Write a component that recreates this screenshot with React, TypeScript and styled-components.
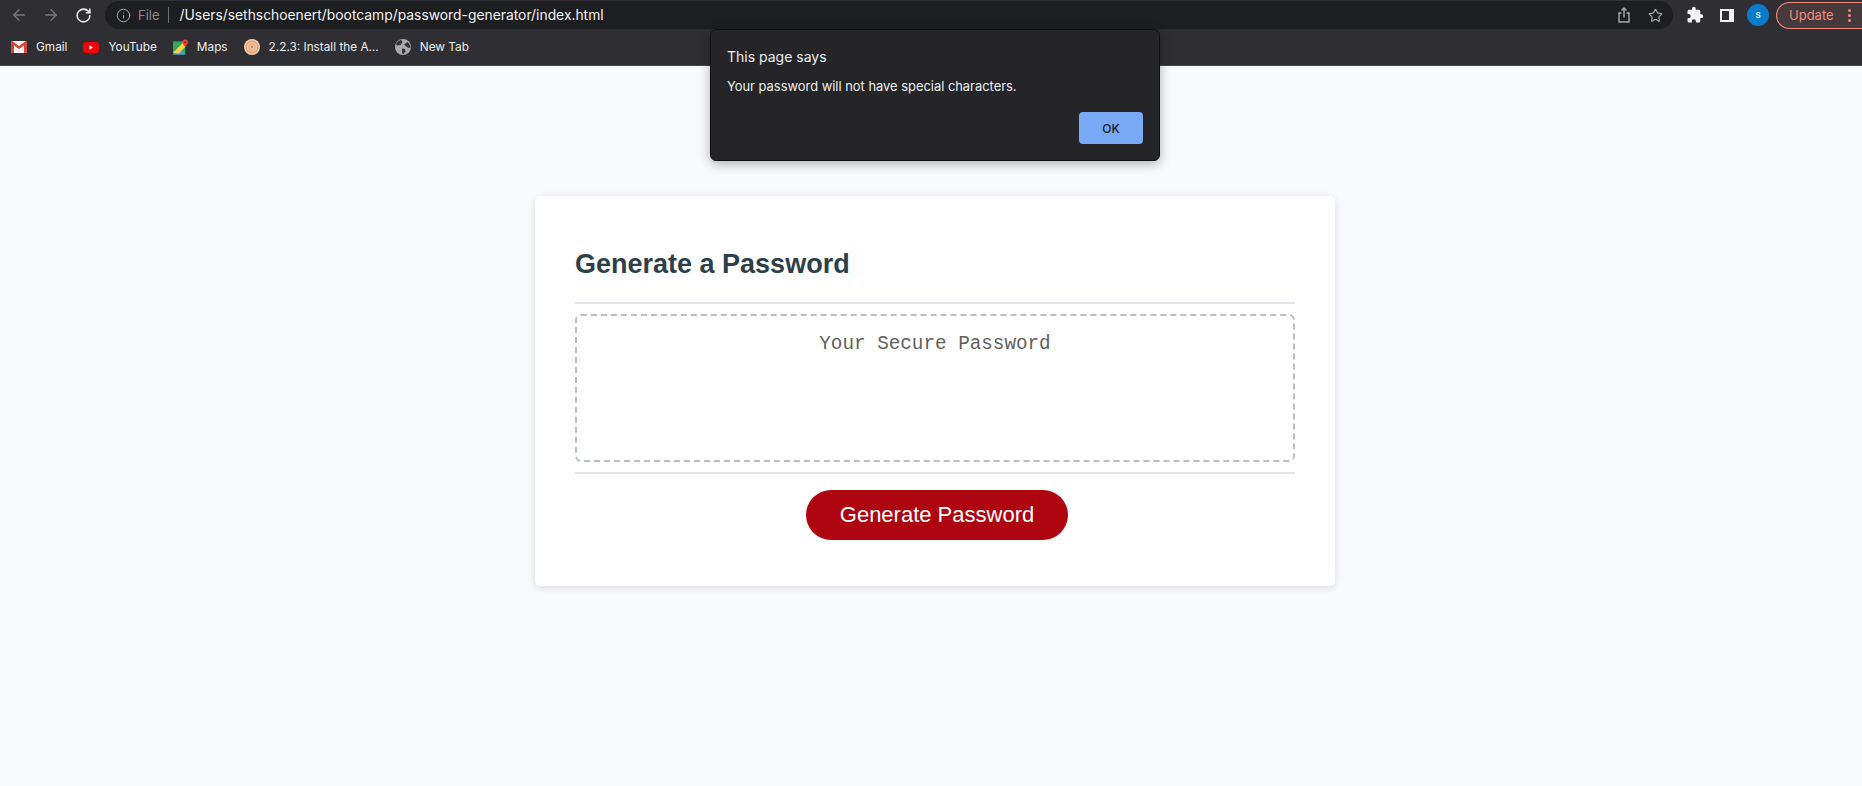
import styled, { createGlobalStyle } from "styled-components";
import { ArrowLeft, ArrowRight, RotateCw, Info, Star } from "lucide-react";
import { MdExtension } from "react-icons/md";

const GlobalStyle = createGlobalStyle`
  html, body {
    margin: 0;
    padding: 0;
    height: 786px;
    overflow: hidden;
    background-color: #f9fafe;
  }
`;

// #region browser chrome
const Chrome = styled.div`
  height: 66px;
  box-sizing: border-box;
  border-bottom: 1px solid #45464a;
  background-color: #2f2f33;
  font-family: Inter, "Liberation Sans", sans-serif;
`;

const Toolbar = styled.div`
  height: 30px;
  padding-left: 3px;
  display: flex;
  align-items: center;
`;

const NavButton = styled.div<{ $dim?: boolean }>`
  width: 32px;
  display: flex;
  justify-content: center;
  color: ${(p) => (p.$dim ? "#77787c" : "#e8eaed")};
`;

const Omnibox = styled.div`
  flex: 1;
  height: 28px;
  margin-left: 6px;
  padding: 0 10px 0 11px;
  display: flex;
  align-items: center;
  border-radius: 14px;
  background-color: #1d1e20;
`;

const SiteLabel = styled.span`
  margin-left: 7px;
  padding-right: 8px;
  border-right: 1px solid #6b6d70;
  line-height: 16px;
  font-size: 13px;
  color: #8b8d90;
`;

const Url = styled.span`
  flex: 1;
  margin-left: 11px;
  font-size: 13.85px;
  color: #f1f3f4;
`;

const OmniboxActions = styled.div`
  display: flex;
  align-items: center;
  gap: 17px;
  color: #a9abae;
`;

const ToolbarActions = styled.div`
  width: 189px;
  flex-shrink: 0;
  padding-left: 13px;
  box-sizing: border-box;
  display: flex;
  align-items: center;
  color: #f1f3f4;

  svg {
    flex-shrink: 0;
  }
`;

const SidePanelIcon = styled.div`
  width: 14px;
  height: 13px;
  flex-shrink: 0;
  margin-left: 16px;
  box-sizing: border-box;
  border: 2px solid #f1f3f4;
  border-right-width: 5px;
`;

const Avatar = styled.div`
  width: 22px;
  height: 22px;
  margin-left: 13px;
  display: flex;
  align-items: center;
  justify-content: center;
  flex-shrink: 0;
  border-radius: 50%;
  background-color: #0a7ccb;
  font-size: 8px;
  font-weight: 600;
  color: #e8f3fb;
`;

const UpdateChip = styled.div`
  width: 86px;
  height: 27px;
  margin-left: 7px;
  padding-left: 12px;
  box-sizing: border-box;
  display: flex;
  align-items: center;
  flex-shrink: 0;
  border: 1px solid #f28b82;
  border-right: none;
  border-radius: 14px 0 0 14px;
  background-color: #46393b;
  font-size: 13px;
  color: #f28b82;
`;

const Dots = styled.div`
  margin-left: 14px;
  display: flex;
  flex-direction: column;
  gap: 2px;
`;

const Dot = styled.span`
  width: 3px;
  height: 3px;
  border-radius: 50%;
  background-color: #f28b82;
`;

const BookmarkBar = styled.div`
  height: 34px;
  padding-left: 11px;
  display: flex;
  align-items: center;
  gap: 16px;
`;

const Bookmark = styled.div`
  display: flex;
  align-items: center;
  gap: 9px;
  font-size: 11.8px;
  color: #eceef0;
`;
// #endregion browser chrome

// #region page
const Page = styled.main`
  padding: 130px 0 0 8px;
  font-family: "Liberation Sans", Arial, sans-serif;
`;

const Card = styled.section`
  width: 800px;
  margin: 0 auto;
  padding: 30px 40px 46px;
  box-sizing: border-box;
  border-radius: 5px;
  background-color: #fff;
  box-shadow: rgba(0, 0, 25, 0.12) 0 2px 8px;
  color: #2f3f4a;
`;

const Heading = styled.h2`
  margin: 22px 0 22px;
  line-height: 32px;
  font-size: 27px;
  font-weight: 700;
`;

const Rule = styled.div`
  height: 2px;
  background-color: #e1e5ea;
`;

const PasswordBox = styled.div`
  height: 148px;
  margin: 10px 0;
  padding-top: 17px;
  box-sizing: border-box;
  border: 2px dashed #b9bfc8;
  border-radius: 6px;
  text-align: center;
  line-height: 22px;
  font-family: "Liberation Mono", "Courier New", monospace;
  font-size: 19.3px;
  color: #5f5f5f;
`;

const Footer = styled.div`
  padding-top: 16px;
  display: flex;
  justify-content: center;
`;

const GenerateButton = styled.button`
  width: 262px;
  height: 50px;
  margin-left: 4px;
  padding: 0;
  border: none;
  border-radius: 25px;
  background-color: #ae0511;
  font-family: inherit;
  font-size: 22px;
  color: #fff;
`;
// #endregion page

// #region alert
const AlertBox = styled.div`
  position: absolute;
  top: 29px;
  left: 710px;
  width: 450px;
  height: 132px;
  padding: 16px;
  box-sizing: border-box;
  border: 1px solid #111;
  border-radius: 6px;
  background-color: #252527;
  box-shadow: rgba(0, 0, 0, 0.3) 0 3px 12px;
  font-family: Inter, "Liberation Sans", sans-serif;
  color: #eceef0;
`;

const AlertTitle = styled.div`
  line-height: 22px;
  font-size: 14px;
`;

const AlertMessage = styled.div`
  margin-top: 9px;
  line-height: 20px;
  font-size: 12.9px;
`;

const AlertActions = styled.div`
  margin-top: 15px;
  display: flex;
  justify-content: flex-end;
`;

const OkButton = styled.button`
  width: 64px;
  height: 32px;
  padding: 0;
  border: none;
  border-radius: 4px;
  background-color: #7aa9f5;
  font-family: inherit;
  font-size: 12px;
  font-weight: 500;
  color: #16181c;
`;
// #endregion alert

function ShareIcon() {
  return (
    <svg width="14" height="16" viewBox="0 0 14 16" fill="none" stroke="currentColor" strokeWidth="1.4">
      <path d="M4.5 6H2v9h10V6H9.5" />
      <path d="M7 10.5V1.2M4.5 3.5 7 1l2.5 2.5" />
    </svg>
  );
}

function GmailIcon() {
  return (
    <svg width="16" height="12" viewBox="0 0 16 12">
      <rect width="16" height="12" rx="1" fill="#f1f1f1" />
      <path d="M0 1v10a1 1 0 0 0 1 1h2V4.5L8 8l5-3.5V12h2a1 1 0 0 0 1-1V1a1 1 0 0 0-1.6-.8L8 5 1.6.2A1 1 0 0 0 0 1z" fill="#d9443a" />
    </svg>
  );
}

function YoutubeIcon() {
  return (
    <svg width="16" height="11" viewBox="0 0 16 11">
      <rect width="16" height="11" rx="3" fill="#f40009" />
      <path d="M6.4 3.3v4.4l3.7-2.2z" fill="#fff" />
    </svg>
  );
}

function MapsIcon() {
  return (
    <svg width="15" height="16" viewBox="0 0 16 16">
      <rect y="2" width="13" height="14" fill="#34a853" />
      <path d="M0 16 7 9l6 7z" fill="#5c9df5" />
      <path d="M0 14 12 2h1v6L6 15z" fill="#fbd14b" />
      <path d="M13 0a3 3 0 0 1 3 3c0 2-3 5-3 5s-3-3-3-5a3 3 0 0 1 3-3z" fill="#ea4335" />
      <circle cx="13" cy="3" r="1" fill="#8c1c13" />
    </svg>
  );
}

function CourseIcon() {
  return (
    <svg width="16" height="16" viewBox="0 0 16 16" fill="none">
      <circle cx="8" cy="8" r="8" fill="#f3cdb2" />
      <circle cx="8" cy="8" r="5.8" stroke="#e39c70" strokeWidth="1.4" />
      <circle cx="8" cy="8" r="3.2" stroke="#e8a57d" strokeWidth="1.2" />
      <circle cx="8" cy="8" r="1.2" fill="#d9814c" />
    </svg>
  );
}

function GlobeIcon() {
  return (
    <svg width="16" height="16" viewBox="0 0 16 16">
      <circle cx="8" cy="8" r="8" fill="#a9abae" />
      <path d="M6 .8 7.5 3 5.5 6 2 6.5 1 5A8 8 0 0 1 6 .8zM9 5.5l3.5-2.5L15 6l.5 3-3-.5zM7 9.5l3 .5.5 2.5-2.5 3-1-2z" fill="#35363a" />
    </svg>
  );
}

const bookmarks = [
  { label: "Gmail", icon: <GmailIcon /> },
  { label: "YouTube", icon: <YoutubeIcon /> },
  { label: "Maps", icon: <MapsIcon /> },
  { label: "2.2.3: Install the A...", icon: <CourseIcon /> },
  { label: "New Tab", icon: <GlobeIcon /> },
];

export default function App() {
  return (
    <>
      <GlobalStyle />
      <Chrome>
        <Toolbar>
          <NavButton $dim>
            <ArrowLeft size={18} strokeWidth={1.8} />
          </NavButton>
          <NavButton $dim>
            <ArrowRight size={18} strokeWidth={1.8} />
          </NavButton>
          <NavButton>
            <RotateCw size={17} strokeWidth={2.2} />
          </NavButton>
          <Omnibox>
            <Info size={15} strokeWidth={1.6} color="#a9abae" />
            <SiteLabel>File</SiteLabel>
            <Url>/Users/sethschoenert/bootcamp/password-generator/index.html</Url>
            <OmniboxActions>
              <ShareIcon />
              <Star size={15} strokeWidth={1.8} />
            </OmniboxActions>
          </Omnibox>
          <ToolbarActions>
            <MdExtension size={18} />
            <SidePanelIcon />
            <Avatar>S</Avatar>
            <UpdateChip>
              Update
              <Dots>
                <Dot />
                <Dot />
                <Dot />
              </Dots>
            </UpdateChip>
          </ToolbarActions>
        </Toolbar>
        <BookmarkBar>
          {bookmarks.map((b) => (
            <Bookmark key={b.label}>
              {b.icon}
              {b.label}
            </Bookmark>
          ))}
        </BookmarkBar>
      </Chrome>
      <Page>
        <Card>
          <Heading>Generate a Password</Heading>
          <Rule />
          <PasswordBox>Your Secure Password</PasswordBox>
          <Rule />
          <Footer>
            <GenerateButton>Generate Password</GenerateButton>
          </Footer>
        </Card>
      </Page>
      <AlertBox>
        <AlertTitle>This page says</AlertTitle>
        <AlertMessage>Your password will not have special characters.</AlertMessage>
        <AlertActions>
          <OkButton>OK</OkButton>
        </AlertActions>
      </AlertBox>
    </>
  );
}
